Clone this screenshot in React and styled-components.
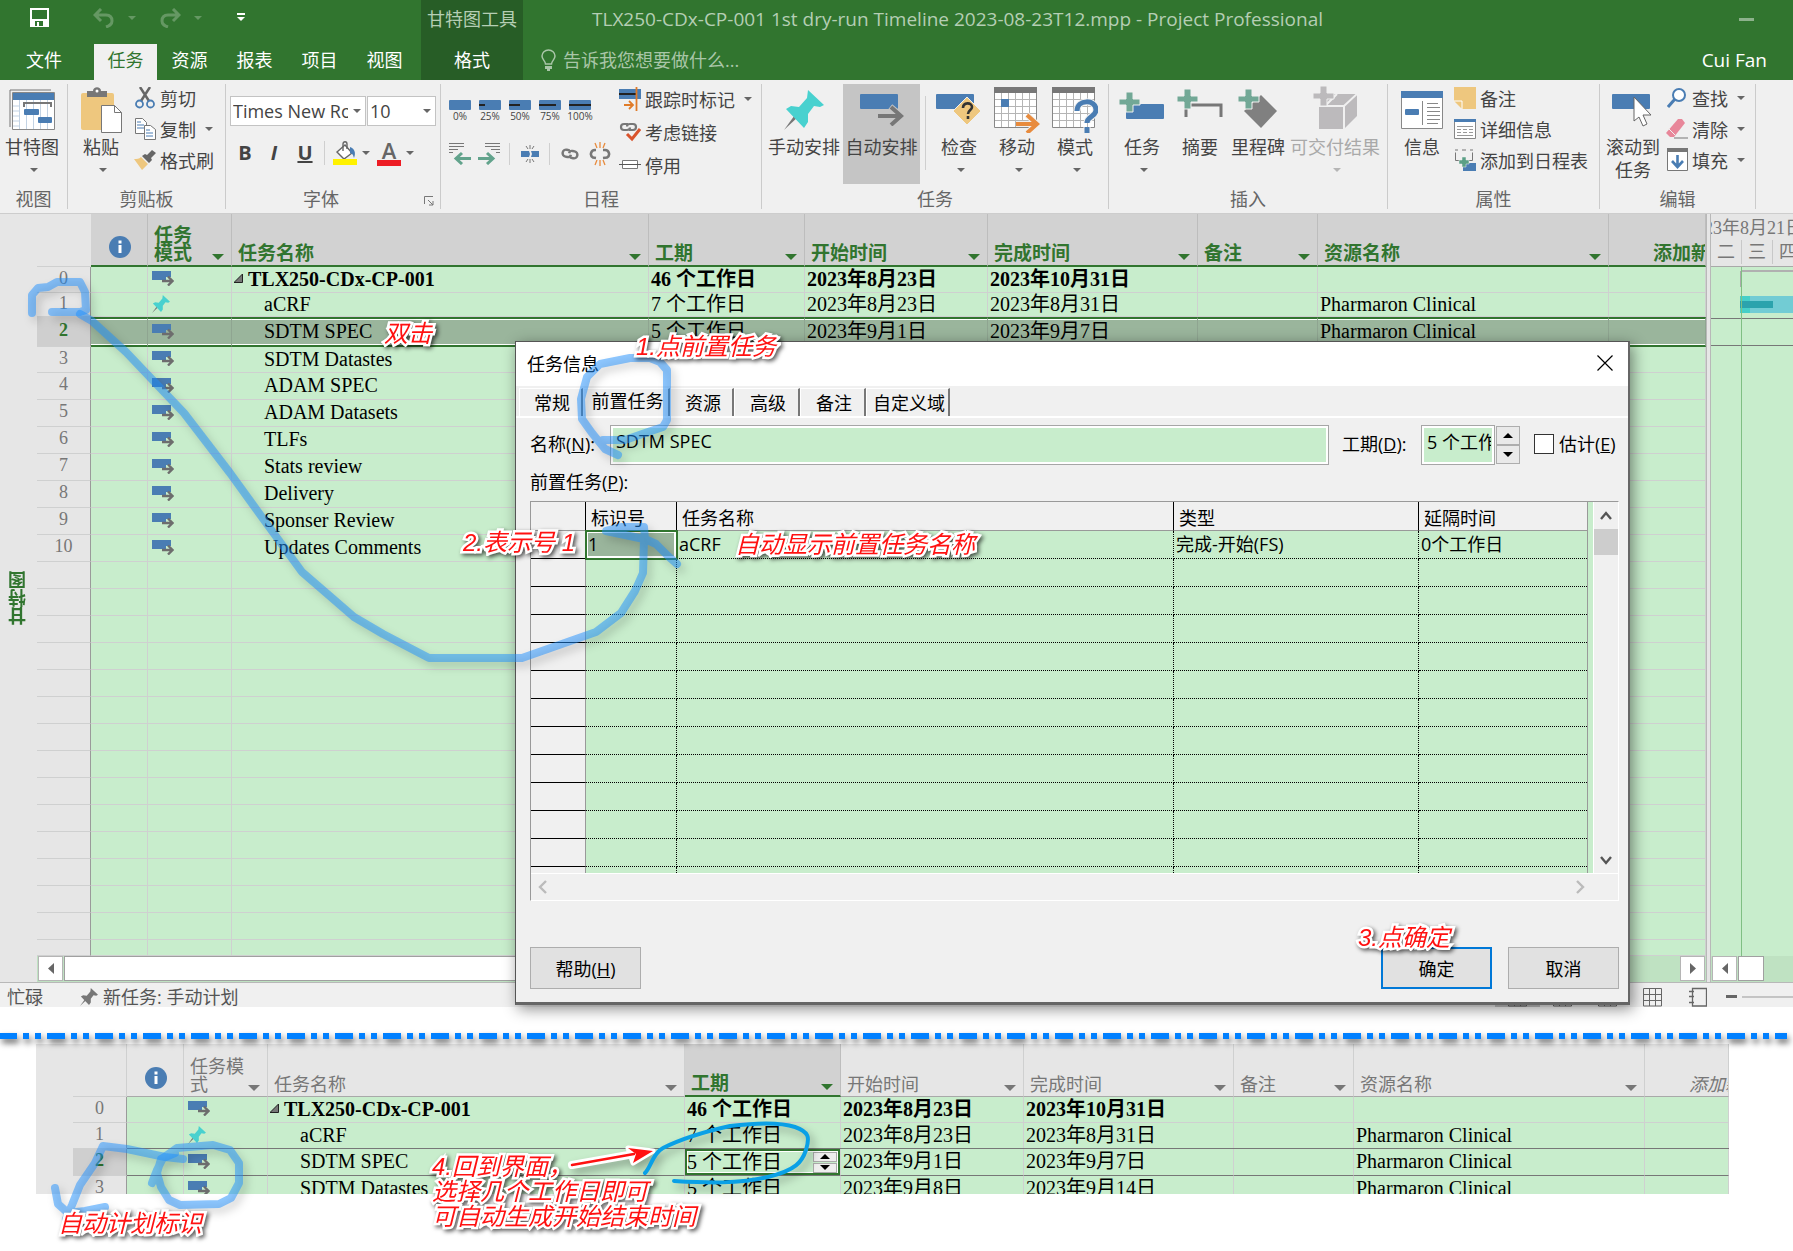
import React from "react";
import styled, { createGlobalStyle, css } from "styled-components";

const ui = `"Open Sans", "Noto Sans CJK SC", sans-serif`;
const serif = `"Liberation Serif", "Noto Sans CJK SC", serif`;
const c = {
  brand: "#31752f",
  brandDark: "#275d26",
  ribbon: "#f0f0f0",
  cell: "#c8edcc",
  line: "#cfd0d0",
  picked: "#9ab59c",
  blue: "#4a7db3",
  teal: "#48d1cf",
  mint: "#72a896",
  orange: "#e88b3d",
  tan: "#eec77e",
};

const Global = createGlobalStyle`
  * { box-sizing: border-box; }
  body { margin: 0; background: #fff; font-family: ${ui}; font-size: 18px; color: #000; }
  button, input, select { font: inherit; color: inherit; margin: 0; padding: 0; border: 0; background: none; border-radius: 0; }
  svg { display: block; flex: none; }
`;

const Page = styled.div`
  position: relative;
  overflow: hidden;
  padding-bottom: 56px;
`;

/* ---------- title bar ---------- */
const Top = styled.header`
  background: ${c.brand};
  color: #fff;
  display: flex;
  height: 80px;
`;
const TopLeft = styled.div`
  width: 421px;
  display: flex;
  flex-direction: column;
`;
const Quick = styled.div`
  height: 44px;
  padding: 0 0 9px 30px;
  display: flex;
  align-items: center;
`;
const QuickButton = styled.button`
  width: ${(p) => p.$w}px;
  opacity: ${(p) => (p.$dim ? 0.25 : 1)};
`;
const Tabs = styled.nav`
  display: flex;
  height: 36px;
`;
const RibbonTab = styled.button`
  width: ${(p) => p.$w}px;
  height: 36px;
  margin-left: ${(p) => p.$gap || 0}px;
  padding-bottom: 4px;
  line-height: 32px;
  text-align: center;
  color: ${(p) => (p.$on ? c.brand : "#fff")};
  background: ${(p) => (p.$on ? c.ribbon : "transparent")};
`;
const Context = styled.div`
  width: 102px;
  background: ${c.brandDark};
  display: flex;
  flex-direction: column;
  align-items: center;
`;
const ContextName = styled.div`
  height: 44px;
  line-height: 38px;
  color: #b5ceb4;
`;
const TopMain = styled.div`
  flex: 1;
  display: flex;
  flex-direction: column;
`;
const TitleLine = styled.div`
  height: 44px;
  padding: 0 39px 6px 69px;
  display: flex;
  align-items: center;
  justify-content: space-between;
  color: #b5ceb4;
  font-size: 19px;
`;
const Minimise = styled.button`
  width: 15px;
  height: 3px;
  background: #8db28c;
`;
const TellLine = styled.div`
  height: 36px;
  padding: 0 26px 4px 18px;
  display: flex;
  align-items: center;
`;
const Tell = styled.input`
  flex: 1;
  margin-left: 7px;
  &::placeholder { color: #a9c6a8; opacity: 1; }
`;
const Account = styled.span`
  font-size: 19px;
`;

/* ---------- ribbon ---------- */
const Ribbon = styled.div`
  display: flex;
  height: 134px;
  padding: 4px 0;
  background: ${c.ribbon};
  border-bottom: 1px solid #cdcdcd;
  color: #444;
`;
const Group = styled.section`
  width: ${(p) => p.$w}px;
  border-right: 1px solid #cbcbcb;
  display: flex;
  flex-direction: column;
`;
const GroupBody = styled.div`
  flex: none;
  height: 103px;
  display: flex;
  padding-left: ${(p) => p.$pad || 0}px;
`;
const Caption = styled.div`
  display: flex;
  align-items: center;
  line-height: 24px;
  color: #666;
  text-align: center;
  span { flex: 1; }
`;
const Launcher = styled.button`
  width: 24px;
  height: 18px;
  padding: 4px 0 0 8px;
`;
const Big = styled.button`
  width: ${(p) => p.$w}px;
  height: 100px;
  display: flex;
  flex-direction: column;
  align-items: center;
  white-space: nowrap;
  line-height: 22px;
  color: ${(p) => (p.$off ? "#a9a9a9" : "#444")};
  background: ${(p) => (p.$on ? "#c5c5c5" : "transparent")};
`;
const BigIcon = styled.span`
  height: 52px;
  display: flex;
  align-items: center;
`;
const Under = styled.span`
  height: 24px;
  padding-left: ${(p) => (p.$caret ? 4 : 0)}px;
  display: flex;
  align-items: center;
`;
const SmallCol = styled.div`
  display: flex;
  flex-direction: column;
`;
const Small = styled.button`
  height: ${(p) => p.$h || 31}px;
  padding-bottom: 4px;
  display: flex;
  align-items: center;
  white-space: nowrap;
  span { margin: 0 9px 0 4px; }
`;
const SmallIcon = styled.i`
  width: 22px;
  display: flex;
  justify-content: center;
`;
const Column = styled.div`
  width: ${(p) => p.$w}px;
  padding-top: ${(p) => p.$top}px;
`;
const Line = styled.div`
  display: flex;
  align-items: center;
  height: 30px;
  margin-top: ${(p) => p.$top || 0}px;
`;
const SelectBox = styled.span`
  width: ${(p) => p.$w}px;
  height: 30px;
  margin-right: 1px;
  padding-right: 4px;
  border: 1px solid #c3c3c3;
  background: #fff;
  display: flex;
  align-items: center;
`;
const Select = styled.select`
  appearance: none;
  flex: 1;
  min-width: 0;
  margin-right: 5px;
  padding-left: 2px;
  overflow: hidden;
  text-overflow: clip;
`;
const Tool = styled.button`
  width: ${(p) => p.$w}px;
  display: flex;
  align-items: center;
  justify-content: ${(p) => (p.$left ? "flex-start" : "center")};
  gap: 5px;
  font-size: 20px;
  line-height: 24px;
`;
const Rule = styled.i`
  width: 1px;
  height: ${(p) => p.$h || 22}px;
  background: #cfcfcf;
  margin: ${(p) => p.$m || "0 6px"};
`;
const Percents = styled.div`
  display: flex;
  gap: 8px;
`;
const Percent = styled.button`
  width: 22px;
  display: flex;
  flex-direction: column;
  align-items: center;
  font-size: 10px;
  line-height: 12px;
  i { width: 22px; height: 10px; background: ${c.blue}; display: flex; align-items: center; border-radius: 1px; }
  i::before { content: ""; height: 2px; background: #222; width: ${(p) => p.$n}%; }
`;

const Caret = ({ color = "#666" }) => (
  <svg width="8" height="4" viewBox="0 0 8 4"><path d="M0 0h8L4 4z" fill={color} /></svg>
);

const SaveIcon = () => (
  <svg width="19" height="19" viewBox="0 0 19 19"><path d="M1 1h17v17H1z" fill="none" stroke="#fff" strokeWidth="2" /><path d="M2 11h15v7H2z" fill="#fff" /><path d="M5 13h8v5H5z" fill={c.brand} /><path d="M7 14h2v4H7z" fill="#fff" /></svg>
);
const UndoIcon = ({ flip }) => (
  <svg width="22" height="20" viewBox="0 0 22 20"><path transform={flip ? "matrix(-1 0 0 1 22 0)" : undefined} d="M8 1 2 7l6 6M2 7h11c4 0 6 2 6 6s-3 5-6 6" fill="none" stroke="#fff" strokeWidth="3" /></svg>
);
const MoreIcon = () => (
  <svg width="8" height="9" viewBox="0 0 8 9"><path d="M0 0h8v2H0zM0 4h8L4 8z" fill="#fff" /></svg>
);
const BulbIcon = () => (
  <svg width="15" height="22" viewBox="0 0 15 22"><path d="M4.500 15c0-3-3.500-4.500-3.500-8a6.500 6 0 0 1 13 0c0 3.500-3.500 5-3.500 8z" fill="none" stroke="#a9c6a8" strokeWidth="1.500" /><path d="M4 17h7v3H9v2H6v-2H4z" fill="#a9c6a8" /></svg>
);
const GanttIcon = () => (
  <svg width="46" height="42" viewBox="0 0 46 42"><path d="M1 38V1h41" fill="none" stroke="#777" /><path d="M3.500 3.500h42v37h-42z" fill="#fff" stroke="#888" /><path d="M4 4h41v7H4z" fill={c.blue} /><path d="M10.500 11v29M4 17h6M4 22h6M4 27h6M4 32h6M4 37h6M17.500 11v29M24.500 11v29M31.500 11v29M38.500 11v29" stroke="#c3d3e4" /><path d="M15 18v-4h27v4" fill="none" stroke="#777" strokeWidth="2" /><rect x="15" y="20" width="15" height="6" rx="1" fill={c.blue} /><rect x="29" y="28" width="14" height="6" rx="1" fill={c.blue} /></svg>
);
const PasteIcon = () => (
  <svg width="42" height="46" viewBox="0 0 42 46"><rect x="1" y="6" width="33" height="37" rx="2" fill={c.tan} /><path d="M7 4h6c0-5 8-5 8 0h6v6H7z" fill="#777" /><circle cx="17" cy="4" r="1.500" fill="#fff" /><path d="M21.500 18.500h13l7 7v20h-20z" fill="#fff" stroke="#777" /><path d="M34.500 18.500v7h7" fill="none" stroke="#777" /></svg>
);
const CutIcon = () => (
  <svg width="20" height="22" viewBox="0 0 20 22"><path d="M5 0l9 14M15 0 6 14" stroke="#666" strokeWidth="2.500" /><circle cx="4.500" cy="17" r="3.500" fill="none" stroke={c.blue} strokeWidth="1.800" /><circle cx="15.500" cy="17" r="3.500" fill="none" stroke={c.blue} strokeWidth="1.800" /></svg>
);
const CopyIcon = () => (
  <svg width="22" height="22" viewBox="0 0 22 22"><path d="M1.500.5h7l4 4v11h-11z" fill="#fff" stroke="#777" /><path d="M3 4h4M3 7h7M3 10h7" stroke={c.blue} /><path d="M10.500 7.500h6l5 4v10h-11z" fill="#fff" stroke="#777" /><path d="M12 12h4M12 15h7M12 18h7" stroke={c.blue} /></svg>
);
const BrushIcon = () => (
  <svg width="22" height="20" viewBox="0 0 22 20"><path d="M18 0l4 3-5 5 1 2-3 3-7-7 3-2 2 1z" fill="#666" /><path d="M0 9c3 0 5 0 7-2l7 7-6 6z" fill={c.tan} /></svg>
);
const FillIcon = () => (
  <svg width="24" height="24" viewBox="0 0 24 24"><path d="M4 11 12 4l7 8-8 6z" fill="#fff" stroke="#666" strokeWidth="1.400" /><path d="M10 10V3c0-3 4-3 4 0v5" fill="none" stroke="#666" strokeWidth="1.400" /><path d="M17 6c5 2 6 6 4 11-1-3-1-4-4-5z" fill={c.blue} /><path d="M0 18h24v6H0z" fill="#fff200" /></svg>
);
const ColorSwatch = styled.span`
  width: 24px;
  border-bottom: 6px solid #ed1c24;
  text-align: center;
  font-size: 22px;
  font-weight: 600;
  line-height: 20px;
  color: #666;
`;
const LauncherIcon = () => (
  <svg width="10" height="10" viewBox="0 0 10 10"><path d="M.5 8V.5H9M4 4l5 5M9 5v4H5" fill="none" stroke="#777" /></svg>
);
const IndentIcon = ({ flip }) => (
  <svg width="22" height="22" viewBox="0 0 22 22"><g transform={flip ? "matrix(-1 0 0 1 22 0)" : undefined}><path d="M0 .5h15M0 3.500h15M0 6.500h9M0 9.500h4" stroke="#777" /><path d="M22 15.500H8M13 10l-6 5.500 6 5.500" fill="none" stroke="#62a38c" strokeWidth="3" /></g></svg>
);
const SplitIcon = () => (
  <svg width="18" height="18" viewBox="0 0 18 18"><path d="M0 6h8l1 3-1 3H0zM18 6h-8l1 3-1 3h8z" fill={c.blue} /><path d="M9 0v4M5 1l2 3M13 1l-2 3M9 18v-4M5 17l2-3M13 17l-2-3" stroke="#777" /></svg>
);
const LinkIcon = () => (
  <svg width="18" height="12" viewBox="0 0 18 12"><g fill="none" stroke="#777" strokeWidth="2.400" transform="rotate(12 9 6)"><path d="M8 2.500H5a3.500 3.500 0 0 0 0 7h2c2 0 3-1.500 3-3M10 9.500h3a3.500 3.500 0 0 0 0-7h-2c-2 0-3 1.500-3 3" /></g></svg>
);
const UnlinkIcon = () => (
  <svg width="22" height="24" viewBox="0 0 22 24"><g fill="none" stroke="#777" strokeWidth="2.600"><path d="M7 8H6a4 4 0 0 0-2 7.500l3 .5M14 8h2a4 4 0 0 1 2 7.500l-4 .5" /></g><path d="M11 0v6M6 1l2 5M16 1l-2 5M11 24v-6M6 23l2-5M16 23l-2-5" stroke={c.orange} strokeWidth="1.300" /></svg>
);
const TrackIcon = () => (
  <svg width="22" height="24" viewBox="0 0 22 24"><path d="M0 2h22v10H0z" fill={c.blue} /><path d="M0 7h18" stroke="#222" strokeWidth="2" /><path d="M17.500 0v24M5 18h9M10 14l4 4-4 4" fill="none" stroke="#e07b28" strokeWidth="1.800" /></svg>
);
const RespectIcon = () => (
  <svg width="22" height="20" viewBox="0 0 22 20"><g fill="none" stroke="#777" strokeWidth="2.200"><path d="M9 2H5a3 3 0 0 0 0 6h3c2 0 3-1 3-2.500M10 8h4a3 3 0 0 0 0-6h-3c-2 0-3 1-3 2.500" /></g><path d="M8 12l5 5 8-10" fill="none" stroke="#d9532c" strokeWidth="3" /></svg>
);
const IdleIcon = () => (
  <svg width="22" height="10" viewBox="0 0 22 10"><path d="M3.500.5h15v8h-15z" fill="#fff" stroke="#777" /><path d="M0 4.500h22" stroke="#555" /></svg>
);
const PinIcon = ({ w = 40, color = c.teal }) => (
  <svg width={w} height={w} viewBox="0 0 40 40"><path d="M16 25 0 40l13-18z" fill="#777" /><path d="M24 0l16 15-4 2-6-1-6 8 0 8-4 6L2 19l5-3 8 1 8-9z" fill={color} /></svg>
);
const AutoIcon = () => (
  <svg width="44" height="32" viewBox="0 0 44 32"><rect width="38" height="15" rx="1" fill={c.blue} /><path d="M18 22h22M30 13l11 9-11 9" fill="none" stroke="#c5c5c5" strokeWidth="7" /><path d="M18 22h22M31 13l10 9-10 9" fill="none" stroke="#777" strokeWidth="4" /></svg>
);
const InspectIcon = () => (
  <svg width="46" height="32" viewBox="0 0 46 32"><rect width="38" height="15" rx="1" fill={c.blue} /><path d="M31 3 45 17 31 31 17 17z" fill={c.tan} stroke="#f0f0f0" /><path d="M27 14c0-6 9-6 9-1 0 3-4 3-4 7M32 22v3" fill="none" stroke="#333" strokeWidth="2.600" /></svg>
);
const Calendar = () => (
  <>
    <path d="M.5.5h42v40H.5z" fill="#fff" stroke="#888" />
    <path d="M7.500 6v34M14.500 6v34M21.500 6v34M28.500 6v34M35.500 6v34M1 12.500h41M1 19.500h41M1 26.500h41M1 33.500h41" stroke="#b5b5b5" />
    <path d="M0 0h43v6H0z" fill="#777" />
  </>
);
const MoveIcon = () => (
  <svg width="46" height="46" viewBox="0 0 46 46"><Calendar /><path d="M7 12h8v8H7z" fill={c.blue} /><path d="M22 37h20M33 28l10 9-10 9" fill="none" stroke="#f0f0f0" strokeWidth="6" /><path d="M22 37h20M33 28l10 9-10 9" fill="none" stroke={c.orange} strokeWidth="4" /></svg>
);
const ModeIcon = () => (
  <svg width="46" height="46" viewBox="0 0 46 46"><Calendar /><path d="M25 24c0-12 19-12 19-1 0 7-9 6-9 13M35 40v6" fill="none" stroke="#f0f0f0" strokeWidth="7" /><path d="M25 24c0-12 19-12 19-1 0 7-9 6-9 13M35 40v6" fill="none" stroke={c.blue} strokeWidth="5" /></svg>
);
const Plus = ({ color = c.mint }) => <path d="M7 0h7v7h7v6h-7v7H7v-7H0V7h7z" fill={color} stroke="#f0f0f0" />;
const NewTaskIcon = () => (
  <svg width="46" height="36" viewBox="0 0 46 36"><rect x="7" y="12" width="38" height="15" rx="1" fill={c.blue} /><Plus /></svg>
);
const SummaryIcon = () => (
  <svg width="46" height="42" viewBox="0 0 46 42"><path d="M9 28V16h35v12" fill="none" stroke="#777" strokeWidth="3" /><Plus /></svg>
);
const MilestoneIcon = () => (
  <svg width="40" height="42" viewBox="0 0 40 42"><path d="M23 6l16 16-16 17L6 22z" fill="#808080" /><Plus /></svg>
);
const DeliverIcon = () => (
  <svg width="44" height="48" viewBox="0 0 44 48"><path d="M6 20 18 8h26v22L31 43H6z" fill="#bcbabc" /><path d="M6 20h25v23M31 20 44 8M12 20 24 8" fill="none" stroke="#f0f0f0" strokeWidth="2" /><Plus color="#bcbabc" /></svg>
);
const InfoIcon = () => (
  <svg width="42" height="38" viewBox="0 0 42 38"><path d="M.5.500h41v37H.5z" fill="#fff" stroke="#888" /><path d="M0 0h42v7H0z" fill={c.blue} /><rect x="4" y="18" width="14" height="6" rx="1" fill={c.blue} /><path d="M21.500 10v24M26 12.500h11M26 16.500h13M26 20.500h13M26 24.500h13M26 28.500h13M26 32.500h11" stroke="#888" /></svg>
);
const NoteIcon = () => (
  <svg width="22" height="22" viewBox="0 0 22 22"><path d="M0 0h22v22H8L0 14z" fill={c.tan} /><path d="M0 14h8v8" fill="none" stroke="#fff" /></svg>
);
const DetailIcon = () => (
  <svg width="22" height="20" viewBox="0 0 22 20"><path d="M.5.5h21v19H.5z" fill="#fff" stroke="#888" /><path d="M0 0h22v3H0z" fill={c.blue} /><path d="M3 7.500h16M3 10.500h4M9 10.500h4M15 10.500h4M3 13.500h4M9 13.500h4M15 13.500h4M3 16.500h16" stroke="#999" /></svg>
);
const TimelineIcon = () => (
  <svg width="22" height="22" viewBox="0 0 22 22"><path d="M1 1h3M8 1h4M16 1h3M1.500 3.500v8h17v-8" fill="none" stroke="#777" /><rect x="9" y="14" width="13" height="8" fill={c.blue} /><path d="M8 8h4v3h3v4h-3v3H8v-3H5v-4h3z" fill="#5ba086" stroke="#f0f0f0" strokeWidth=".5" /></svg>
);
const ScrollIcon = () => (
  <svg width="42" height="34" viewBox="0 0 42 34"><rect y="1" width="38" height="15" rx="1" fill={c.blue} /><path d="M22 4v24l5-4 4 9 4-2-4-9h8z" fill="#fff" stroke="#666" /></svg>
);
const FindIcon = () => (
  <svg width="20" height="20" viewBox="0 0 20 20"><circle cx="12" cy="7" r="6" fill="#fff" stroke={c.blue} strokeWidth="2" /><path d="M8 11 1 19" stroke={c.blue} strokeWidth="3" /></svg>
);
const EraseIcon = () => (
  <svg width="22" height="20" viewBox="0 0 22 20"><path d="M12 0h4l3 4-11 14H4l-4-4z" fill="#e8879a" /><path d="M3 10l6 6" stroke="#f0f0f0" /><path d="M8 19h14" stroke="#777" /></svg>
);
const FillDownIcon = () => (
  <svg width="21" height="23" viewBox="0 0 21 23"><path d="M.5.500h20v22H.5z" fill="#fff" stroke="#777" /><path d="M0 0h21v4H0z" fill="#777" /><path d="M10.500 7v11M5 13l5.500 6 5.500-6" fill="none" stroke={c.blue} strokeWidth="2.600" /></svg>
);

/* ---------- task sheet ---------- */
const Workspace = styled.main`
  display: flex;
`;
const ViewName = styled.div`
  width: 37px;
  background: #e6e6e6;
  display: flex;
  justify-content: center;
  align-items: center;
  padding-right: 2px;
  span { writing-mode: vertical-rl; transform: rotate(180deg); color: ${c.brand}; font-weight: 700; line-height: 20px; }
`;
const SheetPane = styled.div`
  flex: 1;
  min-width: 0;
  overflow: hidden;
`;
const Sheet = styled.table`
  width: 100%;
  table-layout: fixed;
  border-collapse: separate;
  border-spacing: 0;
  font-family: ${serif};
  font-size: 20px;
  line-height: 20px;
`;
const HeadCell = styled.th`
  height: 53px;
  padding: 0 7px 0 6px;
  vertical-align: bottom;
  text-align: left;
  overflow: hidden;
  white-space: nowrap;
  font-size: ${(p) => (p.$on ? 19 : 18)}px;
  font-weight: ${(p) => (p.$on ? 700 : 400)};
  line-height: 18px;
  color: ${(p) => (p.$on ? c.brand : "#777")};
  background: ${(p) => (p.$on ? "#d2d2d2" : "#e6e6e6")};
  border-right: 1px solid ${(p) => (p.$on ? "#bdbdbd" : c.line)};
  border-bottom: ${(p) => (p.$on ? `2px solid ${c.brand}` : "1px solid #a9a9a9")};
`;
const HeadInner = styled.div`
  display: flex;
  align-items: flex-end;
  justify-content: space-between;
  font-style: ${(p) => (p.$slant ? "italic" : "normal")};
  padding-left: ${(p) => (p.$slant || p.$far ? 38 : 0)}px;
  span { white-space: pre; padding-bottom: 2px; }
`;
const HeadArrow = styled.button`
  border: 6px solid transparent;
  border-top-color: currentColor;
  border-bottom: 0;
  width: 12px;
  height: 6px;
  margin-bottom: 5px;
  flex: none;
`;
const Corner = styled.th`
  background: #e6e6e6;
  border-right: 1px solid ${(p) => (p.$edge ? c.line : "#e6e6e6")};
  border-bottom: 1px solid ${c.line};
`;
const Row = styled.tr`
  height: ${(p) => p.$h}px;
`;
const cellLook = {
  whole: css`
    background: ${c.picked};
    border-top: 2px solid ${c.brand};
    border-bottom: 2px solid ${c.brand};
    border-right-color: #8fa591;
    box-shadow: inset 0 1px #fff, inset 0 -1px #fff;
  `,
  outline: css`
    border-bottom-color: #777;
    box-shadow: 0 -1px #777;
  `,
};
const Num = styled.th`
  padding: 0 0 4px;
  font-family: ${serif};
  font-size: 18px;
  line-height: 18px;
  text-align: center;
  font-weight: ${(p) => (p.$on ? 700 : 400)};
  color: ${(p) => (p.$on ? c.brand : "#777")};
  background: ${(p) => (p.$on ? "#cfcfcf" : "#e6e6e6")};
  border-right: 1px solid #9a9a9a;
  border-bottom: 1px solid ${c.line};
`;
const Cell = styled.td`
  padding: 0 3px 2px;
  padding-left: ${(p) => p.$indent || 2}px;
  background: ${c.cell};
  border-right: 1px solid ${c.line};
  border-bottom: 1px solid ${c.line};
  white-space: nowrap;
  overflow: hidden;
  font-weight: ${(p) => (p.$bold ? 700 : 400)};
  ${(p) => cellLook[p.$look]}
  ${(p) => p.$edit && css`padding: 0; overflow: visible;`}
`;
const NameInner = styled.span`
  display: flex;
  align-items: center;
  gap: 5px;
`;
const EditCell = styled.div`
  display: flex;
  align-items: center;
  justify-content: space-between;
  height: 26px;
  border: 2px solid ${c.brand};
  box-shadow: inset 0 0 0 1px #fff;
`;
const TinySpin = styled.span`
  display: flex;
  flex-direction: column;
  gap: 1px;
  margin-right: 1px;
  button { width: 24px; height: 10px; background: #eee; border: 1px solid #aaa; display: flex; align-items: center; justify-content: center; }
`;

const InfoBadge = () => (
  <svg width="22" height="22" viewBox="0 0 22 22"><circle cx="11" cy="11" r="11" fill={c.blue} /><path d="M9.500 9h3v8h-3zM9.500 4.500h3v3h-3z" fill="#fff" /></svg>
);
const BadgeBox = styled.div`
  display: flex;
  justify-content: center;
  padding: 0 0 7px 2px;
`;
const AutoMark = () => (
  <svg width="22" height="15" viewBox="0 0 22 15"><path d="M0 0h19v6h-5v3H0z" fill={c.blue} /><path d="M10 10h10M16 5.500l4.500 4.500-4.500 4.500" fill="none" stroke="#6d6d6d" strokeWidth="2.400" /></svg>
);
const MarkBox = styled.span`
  display: block;
  padding-left: 2px;
`;
const Fold = () => (
  <svg width="9" height="9" viewBox="0 0 9 9"><path d="M8.500 0v8.500H0z" fill="#777" stroke="#222" /></svg>
);
const Tri = ({ up }) => (
  <svg width="10" height="5" viewBox="0 0 10 5"><path d={up ? "M5 0l5 5H0z" : "M0 0h10L5 5z"} fill="#000" /></svg>
);

const heads = ["i", "任务模式", "任务名称", "工期", "开始时间", "完成时间", "备注", "资源名称", "添加新列"];
const widths = [54, 57, 84, null, 156, 183, 210, 120, 291];
const tasks = [
  ["TLX250-CDx-CP-001", "46 个工作日", "2023年8月23日", "2023年10月31日", ""],
  ["aCRF", "7 个工作日", "2023年8月23日", "2023年8月31日", "Pharmaron Clinical"],
  ["SDTM SPEC", "5 个工作日", "2023年9月1日", "2023年9月7日", "Pharmaron Clinical"],
  ["SDTM Datastes", "5 个工作日", "2023年9月8日", "2023年9月14日", "Pharmaron Clinical"],
];
const laterTasks = ["ADAM SPEC", "ADAM Datasets", "TLFs", "Stats review", "Delivery", "Sponser Review", "Updates Comments"];
const mainRows = [
  ...tasks.slice(0, 3),
  ["SDTM Datastes", "", "", "", ""],
  ...laterTasks.map((n) => [n, "", "", "", ""]),
  ...Array.from({ length: 15 }, () => null),
];
const mainHeights = { 0: 26, 1: 24, 2: 30, 3: 26, 25: 16 };
const lowerHeights = { 0: 26, 1: 26 };

function TaskSheet({ rows, heights, last, wholeRow }) {
  const on = (i) => wholeRow || i === 3;
  return (
    <Sheet>
      <colgroup>
        {widths.map((w, i) => <col key={i} style={w ? { width: w } : undefined} />)}
        <col style={{ width: last }} />
      </colgroup>
      <thead>
        <tr>
          <Corner $edge={!wholeRow} />
          {heads.map((h, i) => (
            <HeadCell key={h} $on={on(i)}>
              {i === 0 ? (
                <BadgeBox><InfoBadge /></BadgeBox>
              ) : (
                <HeadInner $far={i === 8} $slant={i === 8 && !wholeRow}>
                  <span>{i === 1 ? (wholeRow ? "任务\n模式" : "任务模\n式") : h}</span>
                  {i < 8 && <HeadArrow aria-label={h} />}
                </HeadInner>
              )}
            </HeadCell>
          ))}
        </tr>
      </thead>
      <tbody>
        {rows.map((r, n) => {
          const picked = n === 2;
          const look = picked ? (wholeRow ? "whole" : "outline") : undefined;
          const bold = n === 0;
          const editing = picked && !wholeRow;
          const d = r || ["", "", "", "", ""];
          return (
            <Row key={n} $h={heights[n] || 27}>
              <Num $on={picked}>{r ? n : ""}</Num>
              <Cell $look={look} />
              <Cell $look={look}><MarkBox>{r && (n === 1 ? <PinIcon w={18} /> : <AutoMark />)}</MarkBox></Cell>
              <Cell $look={look} $bold={bold} $indent={bold ? 2 : 32}>
                {bold ? <NameInner><Fold />{d[0]}</NameInner> : d[0]}
              </Cell>
              <Cell $look={look} $bold={bold} $edit={editing}>
                {editing ? (
                  <EditCell>
                    {d[1]}
                    <TinySpin>
                      <button aria-label="增加"><Tri up /></button>
                      <button aria-label="减少"><Tri /></button>
                    </TinySpin>
                  </EditCell>
                ) : d[1]}
              </Cell>
              <Cell $look={look} $bold={bold}>{d[2]}</Cell>
              <Cell $look={look} $bold={bold}>{d[3]}</Cell>
              <Cell $look={look} />
              <Cell $look={look}>{d[4]}</Cell>
              <Cell $look={look} />
            </Row>
          );
        })}
      </tbody>
    </Sheet>
  );
}

const Splitter = styled.div`
  width: 5px;
  background: #e6e6e6;
  border: 1px solid #b8b8b8;
  border-width: 0 1px;
`;
const GanttPane = styled.aside`
  width: 82px;
  overflow: hidden;
  display: flex;
  flex-direction: column;
  background: ${c.cell};
`;
const Scale = styled.div`
  height: 53px;
  padding-top: 2px;
  background: #e6e6e6;
  border-bottom: 1px solid #a9a9a9;
  color: #777;
  font-family: ${serif};
  font-size: 18px;
  white-space: nowrap;
`;
const Week = styled.div`
  margin-left: -7px;
  line-height: 24px;
`;
const Days = styled.div`
  display: flex;
  line-height: 24px;
  span { width: 31px; flex: none; text-align: center; border-right: 1px solid #c8c8c8; }
`;
const GanttBody = styled.div`
  flex: 1;
  min-height: 0;
`;
const ScrollRow = styled.div`
  height: 26px;
  display: flex;
  gap: 1px;
  padding: 0 1px 1px;
  background: #bfe2c2;
`;
const ScrollButton = styled.button`
  width: 25px;
  background: #fff;
  border: 1px solid #b5b5b5;
  display: flex;
  align-items: center;
  justify-content: center;
`;
const Thumb = styled.div`
  width: ${(p) => p.$w};
  background: #fff;
  border: 1px solid #a0a0a0;
`;
const Gap = styled.div`
  flex: 1;
`;
const Side = ({ right }) => (
  <svg width="6" height="11" viewBox="0 0 6 11"><path d={right ? "M0 0l6 5.500L0 11z" : "M6 0v11L0 5.500z"} fill="#666" /></svg>
);
const StatusBar = styled.footer`
  height: 25px;
  overflow: hidden;
  display: flex;
  align-items: center;
  padding: 4px 0 0 7px;
  border-top: 1px solid #b8b8b8;
  background: ${c.ribbon};
  color: #555;
  line-height: 20px;
`;
const PinLabel = styled.span`
  display: flex;
  align-items: center;
  gap: 5px;
  margin-left: 37px;
`;
const ViewIcons = styled.span`
  display: flex;
  align-items: center;
  margin-left: auto;
`;
const ViewIcon = styled.button`
  width: 45px;
  height: 24px;
  display: flex;
  align-items: center;
  justify-content: center;
  background: ${(p) => (p.$on ? "#c5c5c5" : "transparent")};
`;
const ZoomBar = styled.span`
  margin-left: 6px;
`;

/* ---------- lower capture ---------- */
const Divider = styled.div`
  height: 6px;
  margin: 26px 6px 5px 0;
  background: repeating-linear-gradient(90deg, #0080ff 0 17px, transparent 17px 23px, #0080ff 23px 29px, transparent 29px 35px, #0080ff 35px 41px, transparent 41px 47px, #0080ff 47px 48px);
  filter: drop-shadow(2px 4px 3px rgba(0, 0, 0, 0.6));
  position: relative;
`;
const Lower = styled.section`
  display: flex;
  height: 150px;
  margin: 0 64px 0 36px;
  overflow: hidden;
`;
const LowerStrip = styled.div`
  width: 37px;
  background: #e6e6e6;
`;

/* ---------- dialog ---------- */
const Dialog = styled.section`
  position: absolute;
  left: 515px;
  top: 341px;
  width: 1115px;
  background: #f0f0f0;
  border: 1px solid #555;
  border-right: 2px solid #666;
  border-bottom: 3px solid #666;
  box-shadow: 3px 4px 14px rgba(0, 0, 0, 0.45);
`;
const DialogTitle = styled.div`
  height: 44px;
  padding: 0 15px 2px 11px;
  background: #fff;
  display: flex;
  align-items: center;
  justify-content: space-between;
`;
const DialogTabs = styled.div`
  display: flex;
  height: 32px;
  padding: 2px 0 0 3px;
  border-bottom: 2px solid #fff;
`;
const DialogTab = styled.button`
  width: ${(p) => p.$w}px;
  line-height: ${(p) => (p.$on ? 24 : 28)}px;
  padding: 0 0 ${(p) => (p.$on ? 4 : 0)}px 3px;
  white-space: nowrap;
  border-left: 1px solid #fff;
  border-top: 1px solid #fff;
  border-right: 2px solid #777;
`;
const DialogBody = styled.div`
  padding: 7px 9px 13px 14px;
`;
const FormRow = styled.div`
  display: flex;
  height: 40px;
`;
const Label = styled.label`
  width: ${(p) => p.$w}px;
  line-height: 38px;
  white-space: nowrap;
  &:nth-of-type(2) { margin-left: 13px; }
`;
const Field = styled.input`
  width: ${(p) => (p.$w ? `${p.$w}px` : "auto")};
  flex: ${(p) => (p.$w ? "none" : 1)};
  min-width: 0;
  height: 40px;
  padding: 0 3px 8px 5px;
  background: ${c.cell};
  border: 1px solid #a6a6a6;
  box-shadow: inset 0 0 0 2px #fff;
`;
const Spin = styled.span`
  width: 24px;
  margin: 1px 14px 1px 1px;
  display: flex;
  flex-direction: column;
  button { flex: 1; background: #e9e9e9; border: 1px solid #adadad; display: flex; align-items: center; justify-content: center; }
`;
const Check = styled.input`
  appearance: none;
  width: 20px;
  height: 20px;
  margin: 9px 5px 0 0;
  background: #fff;
  border: 1px solid #333;
`;
const ListLabel = styled.div`
  line-height: 34px;
  padding-bottom: 2px;
`;
const Frame = styled.div`
  border: 1px solid #999;
  border-right-color: #fff;
  border-bottom-color: #fff;
`;
const FrameTop = styled.div`
  display: flex;
  height: 372px;
  border-bottom: 1px solid #fff;
`;
const GridWrap = styled.div`
  flex: 1;
  overflow: hidden;
  padding-right: 5px;
  background: ${c.cell};
`;
const Links = styled.table`
  width: 100%;
  table-layout: fixed;
  border-collapse: separate;
  border-spacing: 0;
  line-height: 24px;
  border-right: 1px solid #999;
  th, td { height: 28px; padding: 0 2px; text-align: left; font-weight: 400; white-space: nowrap; }
  thead th { background: #f0f0f0; border-right: 1px solid #000; border-bottom: 1px solid #999; padding: 4px 5px 0; }
  tbody th { background: #f0f0f0; border-right: 1px solid #999; border-bottom: 1px solid #000; }
  td { border-right: 1px dotted #000; border-bottom: 1px dotted #000; padding-bottom: 2px; }
  th:last-child, td:last-child { border-right: 0; }
`;
const PickedCell = styled.td`
  background: ${c.picked};
  outline: 2px solid ${c.brand};
  outline-offset: -1px;
  box-shadow: inset 0 0 0 2px #fff;
`;
const VScroll = styled.div`
  width: 25px;
  border-left: 1px solid #fff;
  display: flex;
  flex-direction: column;
  align-items: center;
  i { width: 24px; height: 26px; background: #cdcdcd; }
  button { height: 27px; }
  button:last-child { margin-top: auto; }
`;
const HScroll = styled.div`
  height: 26px;
  padding: 0 32px 0 6px;
  display: flex;
  align-items: center;
  justify-content: space-between;
`;
const Chevron = ({ d, color = "#555" }) => (
  <svg width="14" height="14" viewBox="0 0 14 14"><path d={d} fill="none" stroke={color} strokeWidth="2.400" /></svg>
);
const Buttons = styled.div`
  display: flex;
  gap: 16px;
  margin-top: 46px;
`;
const PushButton = styled.button`
  width: 111px;
  height: 42px;
  padding-bottom: 1px;
  background: #e1e1e1;
  border: ${(p) => (p.$main ? "2px solid #0078d7" : "1px solid #adadad")};
  &:first-child { margin-right: auto; }
`;

/* ---------- mark-up over the captures ---------- */
const Ink = styled.svg`
  position: absolute;
  left: 0;
  top: 0;
  pointer-events: none;
  filter: drop-shadow(4px 5px 4px rgba(0, 0, 0, 0.3));
`;
const Note = styled.p`
  position: absolute;
  left: ${(p) => p.$x}px;
  top: ${(p) => p.$y}px;
  margin: 0;
  font-family: "Liberation Sans", "Noto Sans CJK SC", sans-serif;
  font-size: 24px;
  font-weight: 400;
  font-style: italic;
  line-height: 25px;
  color: #f11;
  white-space: pre;
  -webkit-text-stroke: 5px #fff;
  paint-order: stroke fill;
  filter: drop-shadow(2px 2px 2px rgba(0, 0, 0, 0.65));
`;

const dialogTabs = [["常规", 64], ["前置任务", 87], ["资源", 64], ["高级", 66], ["备注", 66], ["自定义域", 84]];

function BigButton({ w, icon, text, text2, caret, on, off }) {
  return (
    <Big $w={w} $on={on} $off={off} disabled={off}>
      <BigIcon>{icon}</BigIcon>
      {text}
      <Under $caret={caret}>{text2}{caret && <Caret color={off ? "#b5b5b5" : undefined} />}</Under>
    </Big>
  );
}
function SmallButton({ icon, text, caret, h }) {
  return (
    <Small $h={h}><SmallIcon>{icon}</SmallIcon><span>{text}</span>{caret && <Caret />}</Small>
  );
}

function PredecessorDialog() {
  return (
    <Dialog role="dialog" aria-label="任务信息">
      <DialogTitle>
        任务信息
        <button aria-label="关闭"><svg width="16" height="16" viewBox="0 0 16 16"><path d="M.5.5l15 15M15.500.5l-15 15" stroke="#000" strokeWidth="1.200" /></svg></button>
      </DialogTitle>
      <DialogTabs>
        {dialogTabs.map(([t, w], i) => <DialogTab key={t} $w={w} $on={i === 1}>{t}</DialogTab>)}
      </DialogTabs>
      <DialogBody>
        <FormRow>
          <Label $w={80} htmlFor="name">名称(<u>N</u>):</Label>
          <Field id="name" defaultValue="SDTM SPEC" />
          <Label $w={79} htmlFor="duration">工期(<u>D</u>):</Label>
          <Field id="duration" $w={74} defaultValue="5 个工作日" />
          <Spin>
            <button aria-label="增加"><Tri up /></button>
            <button aria-label="减少"><Tri /></button>
          </Spin>
          <Check id="estimate" type="checkbox" />
          <Label $w={60} htmlFor="estimate">估计(<u>E</u>)</Label>
        </FormRow>
        <ListLabel>前置任务(<u>P</u>):</ListLabel>
        <Frame>
          <FrameTop>
            <GridWrap>
              <Links>
                <colgroup>
                  <col style={{ width: 55 }} /><col style={{ width: 91 }} /><col /><col style={{ width: 245 }} /><col style={{ width: 168 }} />
                </colgroup>
                <thead><tr><th /><th>标识号</th><th>任务名称</th><th>类型</th><th>延隔时间</th></tr></thead>
                <tbody>
                  <tr><th /><PickedCell>1</PickedCell><td>aCRF</td><td>完成-开始(FS)</td><td>0个工作日</td></tr>
                  {Array.from({ length: 12 }, (_, i) => <tr key={i}><th /><td /><td /><td /><td /></tr>)}
                </tbody>
              </Links>
            </GridWrap>
            <VScroll>
              <button aria-label="向上"><Chevron d="M2 10l5-6 5 6" /></button>
              <i />
              <button aria-label="向下"><Chevron d="M2 4l5 6 5-6" /></button>
            </VScroll>
          </FrameTop>
          <HScroll>
            <button aria-label="向左"><Chevron color="#bbb" d="M9 1 3 7l6 6" /></button>
            <button aria-label="向右"><Chevron color="#bbb" d="M5 1l6 6-6 6" /></button>
          </HScroll>
        </Frame>
        <Buttons>
          <PushButton>帮助(<u>H</u>)</PushButton>
          <PushButton $main>确定</PushButton>
          <PushButton>取消</PushButton>
        </Buttons>
      </DialogBody>
    </Dialog>
  );
}

const GridGlyph = () => (
  <svg width="19" height="20" viewBox="0 0 19 20"><path d="M.5 1.500h18V19H.5zM.5 7.500h18M.5 13.500h18M6.500 1v18M12.500 1v18" fill="none" stroke="#666" /></svg>
);

export default function App() {
  return (
    <Page>
      <Global />
      <Top>
        <TopLeft>
          <Quick>
            <QuickButton $w={63} aria-label="保存"><SaveIcon /></QuickButton>
            <QuickButton $w={35} $dim aria-label="撤消"><UndoIcon /></QuickButton>
            <QuickButton $w={31} $dim aria-label="撤消列表"><Caret color="#fff" /></QuickButton>
            <QuickButton $w={35} $dim aria-label="恢复"><UndoIcon flip /></QuickButton>
            <QuickButton $w={43} $dim aria-label="恢复列表"><Caret color="#fff" /></QuickButton>
            <QuickButton $w={10} aria-label="自定义"><MoreIcon /></QuickButton>
          </Quick>
          <Tabs>
            <RibbonTab $w={88}>文件</RibbonTab>
            <RibbonTab $w={63} $gap={6} $on>任务</RibbonTab>
            {["资源", "报表", "项目", "视图"].map((t) => <RibbonTab key={t} $w={65}>{t}</RibbonTab>)}
          </Tabs>
        </TopLeft>
        <Context>
          <ContextName>甘特图工具</ContextName>
          <RibbonTab $w={100}>格式</RibbonTab>
        </Context>
        <TopMain>
          <TitleLine>
            <span>TLX250-CDx-CP-001 1st dry-run Timeline 2023-08-23T12.mpp - Project Professional</span>
            <Minimise aria-label="最小化" />
          </TitleLine>
          <TellLine>
            <BulbIcon />
            <Tell aria-label="搜索" placeholder="告诉我您想要做什么..." />
            <Account>Cui Fan</Account>
          </TellLine>
        </TopMain>
      </Top>

      <Ribbon>
        <Group $w={68}>
          <GroupBody><BigButton w={64} icon={<GanttIcon />} text="甘特图" caret /></GroupBody>
          <Caption><span>视图</span></Caption>
        </Group>
        <Group $w={158}>
          <GroupBody>
            <BigButton w={66} icon={<PasteIcon />} text="粘贴" caret />
            <SmallCol>
              <SmallButton icon={<CutIcon />} text="剪切" />
              <SmallButton icon={<CopyIcon />} text="复制" caret />
              <SmallButton icon={<BrushIcon />} text="格式刷" />
            </SmallCol>
          </GroupBody>
          <Caption><span>剪贴板</span></Caption>
        </Group>
        <Group $w={215}>
          <GroupBody $pad={4}>
            <Column $w={210} $top={12}>
              <Line>
                <SelectBox $w={136}><Select aria-label="字体"><option>Times New Roman</option></Select><Caret /></SelectBox>
                <SelectBox $w={69}><Select aria-label="字号"><option>10</option></Select><Caret /></SelectBox>
              </Line>
              <Line $top={12}>
                <Tool $w={30}><b>B</b></Tool>
                <Tool $w={28}><b><i>I</i></b></Tool>
                <Tool $w={34}><b><u>U</u></b></Tool>
                <Rule $h={24} $m="0 8px 0 2px" />
                <Tool $w={44} $left aria-label="填充颜色"><FillIcon /><Caret /></Tool>
                <Tool $w={40} $left><ColorSwatch>A</ColorSwatch><Caret /></Tool>
              </Line>
            </Column>
          </GroupBody>
          <Caption><span>字体</span><Launcher aria-label="字体设置"><LauncherIcon /></Launcher></Caption>
        </Group>
        <Group $w={321}>
          <GroupBody $pad={8}>
            <Column $w={170} $top={16}>
              <Percents>
                {[0, 25, 50, 75, 100].map((n) => <Percent key={n} $n={n}><i />{n}%</Percent>)}
              </Percents>
              <Line $top={17}>
                <Tool $w={29} $left aria-label="升级"><IndentIcon /></Tool>
                <Tool $w={22} aria-label="降级"><IndentIcon flip /></Tool>
                <Rule $m="0 11px 0 9px" />
                <Tool $w={18} aria-label="拆分"><SplitIcon /></Tool>
                <Rule $m="0 11px 0 10px" />
                <Tool $w={28} $left aria-label="链接"><LinkIcon /></Tool>
                <Tool $w={22} aria-label="取消链接"><UnlinkIcon /></Tool>
              </Line>
            </Column>
            <SmallCol>
              <SmallButton h={33} icon={<TrackIcon />} text="跟踪时标记" caret />
              <SmallButton h={33} icon={<RespectIcon />} text="考虑链接" />
              <SmallButton h={33} icon={<IdleIcon />} text="停用" />
            </SmallCol>
          </GroupBody>
          <Caption><span>日程</span></Caption>
        </Group>
        <Group $w={347}>
          <GroupBody $pad={3}>
            <BigButton w={78} icon={<PinIcon />} text="手动安排" />
            <BigButton w={77} icon={<AutoIcon />} text="自动安排" on />
            <Rule $h={74} $m="12px 4px 0 5px" />
            <BigButton w={58} icon={<InspectIcon />} text="检查" caret />
            <BigButton w={58} icon={<MoveIcon />} text="移动" caret />
            <BigButton w={58} icon={<ModeIcon />} text="模式" caret />
          </GroupBody>
          <Caption><span>任务</span></Caption>
        </Group>
        <Group $w={279}>
          <GroupBody $pad={4}>
            <BigButton w={58} icon={<NewTaskIcon />} text="任务" caret />
            <BigButton w={58} icon={<SummaryIcon />} text="摘要" />
            <BigButton w={58} icon={<MilestoneIcon />} text="里程碑" />
            <BigButton w={96} icon={<DeliverIcon />} text="可交付结果" caret off />
          </GroupBody>
          <Caption><span>插入</span></Caption>
        </Group>
        <Group $w={212}>
          <GroupBody $pad={2}>
            <BigButton w={64} icon={<InfoIcon />} text="信息" />
            <SmallCol>
              <SmallButton icon={<NoteIcon />} text="备注" />
              <SmallButton icon={<DetailIcon />} text="详细信息" />
              <SmallButton icon={<TimelineIcon />} text="添加到日程表" />
            </SmallCol>
          </GroupBody>
          <Caption><span>属性</span></Caption>
        </Group>
        <Group $w={156}>
          <GroupBody>
            <BigButton w={66} icon={<ScrollIcon />} text="滚动到" text2="任务" />
            <SmallCol>
              <SmallButton icon={<FindIcon />} text="查找" caret />
              <SmallButton icon={<EraseIcon />} text="清除" caret />
              <SmallButton icon={<FillDownIcon />} text="填充" caret />
            </SmallCol>
          </GroupBody>
          <Caption><span>编辑</span></Caption>
        </Group>
      </Ribbon>

      <Workspace>
        <ViewName><span>甘特图</span></ViewName>
        <SheetPane>
          <TaskSheet rows={mainRows} heights={mainHeights} last={97} wholeRow />
          <ScrollRow>
            <ScrollButton aria-label="向左滚动"><Side /></ScrollButton>
            <Thumb $w="60%" />
            <Gap />
            <ScrollButton aria-label="向右滚动"><Side right /></ScrollButton>
          </ScrollRow>
        </SheetPane>
        <Splitter />
        <GanttPane>
          <Scale>
            <Week>23年8月21日</Week>
            <Days><span>二</span><span>三</span><span>四</span></Days>
          </Scale>
          <GanttBody>
            <svg width="82" height="689" viewBox="0 0 82 689">
              <path d="M30 4h52" stroke="#b0b0b0" strokeWidth="2" /><path d="M30 4v16" stroke="#aaa" strokeWidth="2" />
              <path d="M29 29h53v17H29z" fill="#72ccd4" /><path d="M29 29h10v17H29z" fill="#45cfc8" /><path d="M29 34h33v7H29z" fill="#2ba3ad" />
              <path d="M0 51.500h82M0 78.500h82" stroke="#777" /><path d="M30.500 0v690" stroke="#7fbf83" />
            </svg>
          </GanttBody>
          <ScrollRow>
            <ScrollButton aria-label="向左滚动"><Side /></ScrollButton>
            <Thumb $w="26px" />
          </ScrollRow>
        </GanttPane>
      </Workspace>
      <StatusBar>
        忙碌
        <PinLabel><PinIcon w={18} color="#777" />新任务: 手动计划</PinLabel>
        <ViewIcons>
          <ViewIcon $on aria-label="甘特图视图"><GridGlyph /></ViewIcon>
          <ViewIcon aria-label="任务分配状况"><GridGlyph /></ViewIcon>
          <ViewIcon aria-label="工作组规划器"><GridGlyph /></ViewIcon>
          <ViewIcon aria-label="资源工作表"><GridGlyph /></ViewIcon>
          <ViewIcon aria-label="报表">
            <svg width="18" height="20" viewBox="0 0 18 20"><path d="M3.500 1.500h14V19h-14zM0 4.500h5M0 9.500h5M0 15.500h5" fill="none" stroke="#666" strokeWidth="1.300" /></svg>
          </ViewIcon>
          <ZoomBar>
            <svg width="67" height="4" viewBox="0 0 67 4"><path d="M0 0h11v3H0z" fill="#666" /><path d="M16 2h51" stroke="#999" /></svg>
          </ZoomBar>
        </ViewIcons>
      </StatusBar>

      <Divider />
      <Lower>
        <LowerStrip />
        <SheetPane>
          <TaskSheet rows={tasks} heights={lowerHeights} last={84} />
        </SheetPane>
      </Lower>

      <PredecessorDialog />

      <Ink width="1793" height="1251" viewBox="0 0 1793 1251" fill="none" strokeLinecap="round" strokeLinejoin="round" aria-hidden="true">
        <g stroke="#1e90ff" strokeOpacity=".5" strokeWidth="8">
          <path d="M32 313v-18l6-7 10-1 9-5h23l5 10 1 18-6 2H52" />
          <path d="M80 314l12 7 34 31 58 61 46 60 34 47 38 52 52 45 29 17 46 24h93l74-26 25-19 14-22 8-18 1-34-38-8 16-4h22l1 12 11 5 12 12 9 8" />
          <path d="M603 440h22l23-8 15-5 4-7v-50l-7-8-10-4h-20l-30 6-13 13-6 22 1 20 10 14 13 16 13 6" />
          <path d="M183 1159l-18-2-38-8-24-3-8 17-15 22-8 20-6 14M55 1188l3 16 10 9 17-2 20-4" />
          <path d="M152 1183l5-13 6-12 14-10 36-3 17 5 9 13v20l-8 15-12 6-39 1-11-5-8-13-4-14 4-14 14-6" />
        </g>
        <path d="M645 1173c6-6 8-20 18-25 20-10 40-16 67-22 24-3 50-4 65 1 14 5 15 10 11 23-4 12-10 20-38 27-30 7-60 6-94 4" stroke="#0aa0e6" strokeWidth="4" />
        <path d="M572 1165l62-11" stroke="#fff" strokeWidth="8" /><path d="M628 1148l25 3-20 12z" fill="#fff" stroke="#fff" strokeWidth="5" />
        <path d="M572 1165l62-11" stroke="#f11" strokeWidth="2.500" /><path d="M628 1148l25 3-20 12 3-9z" fill="#f11" />
      </Ink>
      <Note $x={384} $y={321}>双击</Note>
      <Note $x={636} $y={334}>1.点前置任务</Note>
      <Note $x={463} $y={530}>2.表示号 1</Note>
      <Note $x={735} $y={532}>自动显示前置任务名称</Note>
      <Note $x={1358} $y={925}>3.点确定</Note>
      <Note $x={432} $y={1154}>{"4.回到界面，\n选择几个工作日即可\n可自动生成开始结束时间"}</Note>
      <Note $x={58} $y={1211}>自动计划标识</Note>
    </Page>
  );
}
